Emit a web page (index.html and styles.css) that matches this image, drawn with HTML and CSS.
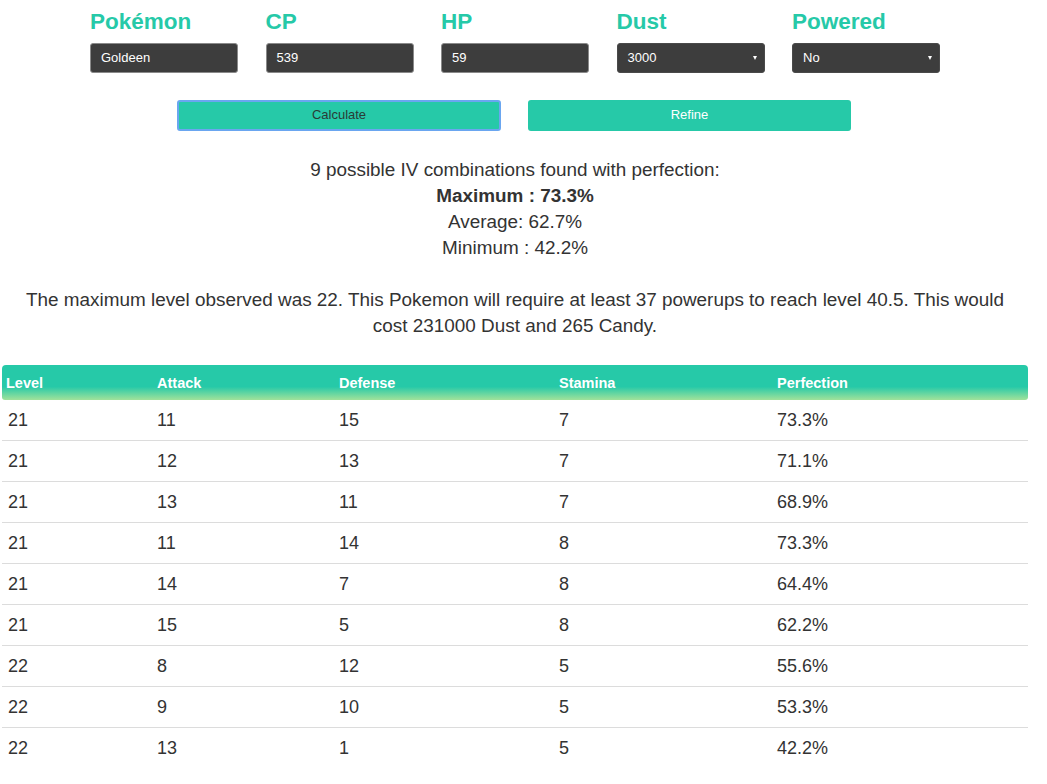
FILE: index.html
```html
<!DOCTYPE html>
<html>
<head>
<meta charset="utf-8">
<link rel="stylesheet" href="styles.css">
</head>
<body>
<div class="page">
  <div class="form-row">
    <div class="field">
      <div class="label">Pokémon</div>
      <div class="input">Goldeen</div>
    </div>
    <div class="field">
      <div class="label">CP</div>
      <div class="input">539</div>
    </div>
    <div class="field">
      <div class="label">HP</div>
      <div class="input">59</div>
    </div>
    <div class="field">
      <div class="label">Dust</div>
      <div class="input select">3000<span class="arrow"></span></div>
    </div>
    <div class="field">
      <div class="label">Powered</div>
      <div class="input select">No<span class="arrow"></span></div>
    </div>
  </div>
  <div class="buttons">
    <div class="btn btn-calc">Calculate</div>
    <div class="btn btn-refine">Refine</div>
  </div>
  <div class="summary">
    <div>9 possible IV combinations found with perfection:</div>
    <div class="bold">Maximum : 73.3%</div>
    <div>Average: 62.7%</div>
    <div>Minimum : 42.2%</div>
  </div>
  <p class="note">The maximum level observed was 22. This Pokemon will require at least 37 powerups to reach level 40.5. This would cost 231000 Dust and 265 Candy.</p>
  <table class="results">
    <thead>
      <tr><th class="c1">Level</th><th class="c2">Attack</th><th class="c3">Defense</th><th class="c4">Stamina</th><th class="c5">Perfection</th></tr>
    </thead>
    <tbody>
      <tr><td>21</td><td>11</td><td>15</td><td>7</td><td>73.3%</td></tr>
      <tr><td>21</td><td>12</td><td>13</td><td>7</td><td>71.1%</td></tr>
      <tr><td>21</td><td>13</td><td>11</td><td>7</td><td>68.9%</td></tr>
      <tr><td>21</td><td>11</td><td>14</td><td>8</td><td>73.3%</td></tr>
      <tr><td>21</td><td>14</td><td>7</td><td>8</td><td>64.4%</td></tr>
      <tr><td>21</td><td>15</td><td>5</td><td>8</td><td>62.2%</td></tr>
      <tr><td>22</td><td>8</td><td>12</td><td>5</td><td>55.6%</td></tr>
      <tr><td>22</td><td>9</td><td>10</td><td>5</td><td>53.3%</td></tr>
      <tr><td>22</td><td>13</td><td>1</td><td>5</td><td>42.2%</td></tr>
    </tbody>
  </table>
</div>
</body>
</html>
```
FILE: styles.css
```css
html, body {
  margin: 0;
  padding: 0;
  background: #fff;
}
body {
  font-family: "Liberation Sans", Arial, sans-serif;
  color: #333;
}
.page {
  width: 1026px;
  margin-left: 2px;
}
.form-row {
  display: flex;
  padding-left: 88px;
  padding-top: 9px;
}
.field {
  width: 175.5px;
}
.label {
  color: #26c9a8;
  font-weight: bold;
  font-size: 22.5px;
  line-height: 26px;
  height: 34px;
}
.input {
  position: relative;
  width: 148px;
  height: 30px;
  box-sizing: border-box;
  background: #3d3d3d;
  border: 1px solid #8a8a8a;
  border-radius: 3px;
  color: #fff;
  font-size: 13px;
  line-height: 28px;
  padding-left: 10px;
}
.select {
  border-color: #4a4a4a;
}
.arrow {
  position: absolute;
  right: 7px;
  top: 12px;
  width: 0;
  height: 0;
  border-left: 2.5px solid transparent;
  border-right: 2.5px solid transparent;
  border-top: 4px solid #fff;
}
.buttons {
  display: flex;
  gap: 27px;
  padding-left: 175px;
  margin-top: 27px;
}
.btn {
  width: 324px;
  height: 31px;
  box-sizing: border-box;
  background: #26c9a8;
  border-radius: 3px;
  font-size: 13px;
  line-height: 29px;
  text-align: center;
}
.btn-calc {
  color: #2a3b36;
  border: 2px solid #6aa6f0;
  line-height: 25px;
}
.btn-refine {
  color: #fff;
  width: 323px;
}
.summary {
  margin-top: 26px;
  text-align: center;
  font-size: 18.9px;
  line-height: 26px;
}
.bold {
  font-weight: bold;
}
.note {
  margin: 26px 0 0 0;
  padding: 0 10px;
  text-align: center;
  font-size: 18.9px;
  line-height: 26px;
}
.results {
  margin-top: 26px;
  width: 1026px;
  border-collapse: separate;
  border-spacing: 0;
  table-layout: fixed;
}
.results th {
  height: 35px;
  padding: 0 0 0 4px;
  text-align: left;
  color: #fff;
  font-size: 14.5px;
  font-weight: bold;
  background: linear-gradient(to bottom, #26c9a8 0%, #26c9a8 62%, #a2e29a 100%);
}
.results th.c1 { width: 147px; border-top-left-radius: 4px; border-bottom-left-radius: 3px; }
.results th.c2 { width: 178px; }
.results th.c3 { width: 216px; }
.results th.c4 { width: 214px; }
.results th.c5 { border-top-right-radius: 4px; border-bottom-right-radius: 3px; }
.results td {
  height: 40px;
  padding: 0 0 0 4px;
  font-size: 18px;
  color: #333;
  border-bottom: 1px solid #dcdcdc;
  vertical-align: middle;
}
.results td:first-child {
  padding-left: 6px;
}
.results tbody tr:last-child td {
  border-bottom: none;
}
```
